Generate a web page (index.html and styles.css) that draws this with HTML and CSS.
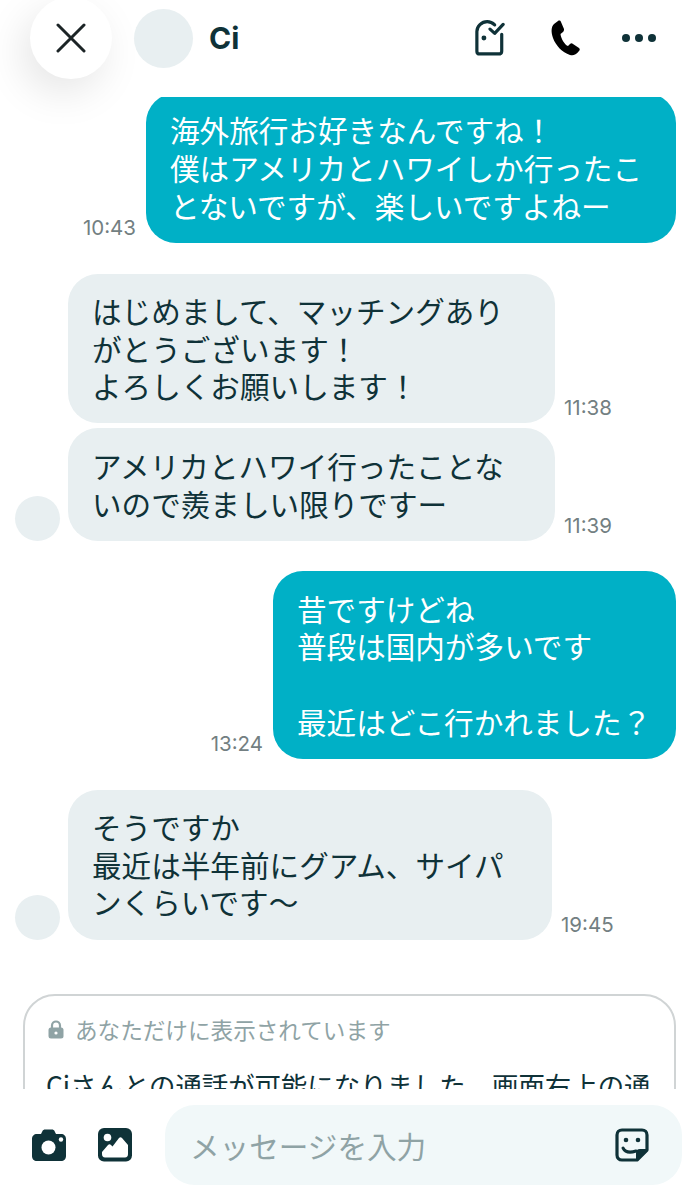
FILE: index.html
```html
<html>
  <head>
    <meta charset="utf-8">
    <link rel="stylesheet" href="styles.css">
  </head>
  <body>
    <div class="page">
      <header class="top">
        <button class="close">
          <svg width="30" height="30" viewBox="0 0 30 30"><path d="M2 2 L28 28 M28 2 L2 28" fill="none" stroke="#1c2426" stroke-width="3" stroke-linecap="round"/></svg>
        </button>
        <div class="top-avatar"></div>
        <div class="name">Ci</div>
        <div class="top-icons">
          <svg class="door" width="30" height="38" viewBox="0 0 32 38"><path d="M21 5 C18 2 15 1.500 13 1.500 C7 1.500 2 6.500 2 12 L2 33 C2 35 3.500 36 5 36 L25 36 C27 36 28.500 35 28.500 33 L28.500 15" fill="none" stroke="#0f3238" stroke-width="3.400" stroke-linecap="round"/><path d="M16 9.500 L21 14 L30 4.500" fill="none" stroke="#0f3238" stroke-width="3.400" stroke-linecap="round" stroke-linejoin="round"/><circle cx="9.500" cy="19" r="2.600" fill="#0f3238"/></svg>
          <svg class="phone" width="30" height="36" viewBox="0 0 30 36"><path d="M7 1 L3 4 C0 7 0 12 2 18 C5 26 11 32 19 35 C22 36 25 35 28 31 C29 30 29 29 28 28 L22 24 C21 23 20 23 19 24 L17 26 C14 25 10 19 9.500 14 L12 12 C13 11 13 10 13 9 L10 2 C9.500 0.500 8 0.300 7 1 Z" fill="#000"/></svg>
          <div class="dots"><i></i><i></i><i></i></div>
        </div>
      </header>

      <main class="chat">
        <div class="row sent first">
          <span class="time">10:43</span>
          <div class="bubble out w530">海外旅行お好きなんですね！<br>僕はアメリカとハワイしか行ったこ<br>とないですが、楽しいですよねー</div>
        </div>

        <div class="row got group">
          <div class="avatar-slot"></div>
          <div class="bubble in w487">はじめまして、マッチングあり<br>がとうございます！<br>よろしくお願いします！</div>
          <span class="time">11:38</span>
        </div>
        <div class="row got tight">
          <div class="avatar-slot"><div class="avatar"></div></div>
          <div class="bubble in w487">アメリカとハワイ行ったことな<br>いので羨ましい限りですー</div>
          <span class="time">11:39</span>
        </div>

        <div class="row sent group">
          <span class="time">13:24</span>
          <div class="bubble out w403">昔ですけどね<br>普段は国内が多いです<br><br>最近はどこ行かれました？</div>
        </div>

        <div class="row got group">
          <div class="avatar-slot"><div class="avatar"></div></div>
          <div class="bubble in w484">そうですか<br>最近は半年前にグアム、サイパ<br>ンくらいです〜</div>
          <span class="time">19:45</span>
        </div>

        <section class="notice">
          <div class="notice-head">
            <svg width="16" height="19" viewBox="0 0 16 19"><path d="M4 8 V5.500 C4 3 6 1.500 8 1.500 C10 1.500 12 3 12 5.500 V8" fill="none" stroke="#8fa3a5" stroke-width="2.200"/><rect x="0.500" y="7.500" width="15" height="11" rx="2.500" fill="#8fa3a5"/><circle cx="8" cy="13" r="1.600" fill="#fff"/></svg>
            <span>あなただけに表示されています</span>
          </div>
          <p class="notice-text">Ciさんとの通話が可能になりました。画面右上の通</p>
        </section>
      </main>

      <footer class="bottom">
        <svg class="tool" width="34" height="32" viewBox="0 0 34 32"><path d="M5 5 H9 L10.500 2 C11 1 12 0.500 13 0.500 H20 C21 0.500 22 1 22.500 2 L24 5 H29 C32 5 34 7 34 10 V27 C34 30 32 32 29 32 H5 C2 32 0 30 0 27 V10 C0 7 2 5 5 5 Z" fill="#0f3238"/><circle cx="16.500" cy="18.500" r="7" fill="#fff"/><circle cx="29" cy="10.500" r="2.200" fill="#fff"/></svg>
        <svg class="tool" width="34" height="34" viewBox="0 0 34 34"><rect width="34" height="33.500" rx="6" fill="#0f3238"/><circle cx="9.500" cy="9.500" r="3.800" fill="#fff"/><path d="M4 26 L4 24 L10 17 C11 16 12 16 13 17 L14.500 18.500 L21 10 C22 9 23 9 24 10 L30 17 V26 C30 28 29 29.500 27 29.500 H7 C5 29.500 4 28 4 26 Z" fill="#fff"/></svg>
        <div class="input">
          <span class="placeholder">メッセージを入力</span>
          <svg width="34" height="34" viewBox="0 0 34 34"><path d="M22 32 H7 C4 32 2 30 2 27 V7 C2 4 4 2 7 2 H27 C30 2 32 4 32 7 V22 Z" fill="none" stroke="#0f3238" stroke-width="3.200" stroke-linejoin="round"/><path d="M22 32 L22 25 C22 23 23 22 25 22 L32 22 Z" fill="#0f3238" stroke="#0f3238" stroke-width="2" stroke-linejoin="round"/><circle cx="11" cy="12" r="2.300" fill="#0f3238"/><circle cx="23" cy="12" r="2.300" fill="#0f3238"/><path d="M8 20 C10 24 15 25 21 23" fill="none" stroke="#0f3238" stroke-width="3" stroke-linecap="round"/></svg>
        </div>
      </footer>
    </div>
  </body>
</html>
```

FILE: styles.css
```css
html,
body {
  margin: 0;
  background: #fff;
}
.page {
  position: relative;
  width: 698px;
  height: 1200px;
  overflow: hidden;
  display: flex;
  flex-direction: column;
  font-family: "Noto Sans CJK JP", "Noto Sans", sans-serif;
  color: #0f3238;
}

/* header */
.top {
  position: relative;
  z-index: 1;
  height: 76px;
  padding: 0 42px 21px 134px;
  background: #fff;
  display: flex;
  align-items: center;
  flex: none;
}
.close {
  position: absolute;
  left: 30px;
  top: -3px;
  width: 82px;
  height: 82px;
  padding: 0;
  border: 0;
  border-radius: 50%;
  background: #fff;
  box-shadow: -8px 14px 40px rgba(0, 0, 0, 0.1);
  display: flex;
  align-items: center;
  justify-content: center;
}
.top-avatar {
  width: 59px;
  height: 59px;
  border-radius: 50%;
  background: #e8eff1;
}
.name {
  margin-left: 16px;
  font-family: Inter, "Liberation Sans", sans-serif;
  font-size: 30px;
  font-weight: 700;
}
.top-icons {
  margin-left: auto;
  display: flex;
  align-items: center;
}
.door {
  margin-right: 46px;
}
.phone {
  margin-right: 41px;
}
.dots {
  display: flex;
  gap: 5px;
}
.dots i {
  width: 8px;
  height: 8px;
  border-radius: 50%;
  background: #0f3238;
}

/* messages */
.chat {
  flex: 1;
  min-height: 0;
  overflow: hidden;
  margin-top: -4px;
  padding: 0 22px 0 15px;
}
.row {
  display: flex;
  align-items: flex-end;
}
.sent {
  justify-content: flex-end;
}
.group {
  margin-top: 30.7px;
}
.first {
  margin-top: 0;
}
.tight {
  margin-top: 5px;
}
.bubble {
  font-size: 29.6px;
  line-height: 37.7px;
  padding: 18.4px 0 18.4px 24px;
  border-radius: 30px;
  box-sizing: border-box;
  white-space: nowrap;
}
.out {
  background: #00b0c6;
  color: #fff;
}
.in {
  background: #e8eff1;
}
.w530 {
  width: 530px;
}
.w487 {
  width: 487px;
}
.w484 {
  width: 484px;
}
.w403 {
  width: 403px;
}
.avatar-slot {
  width: 53px;
  flex: none;
}
.avatar {
  width: 45px;
  height: 45px;
  border-radius: 50%;
  background: #e8eff1;
}
.time {
  font-family: Inter, "Liberation Sans", sans-serif;
  font-size: 20.5px;
  line-height: 22px;
  margin-bottom: 4px;
  color: #737f82;
}
.sent .time {
  margin-right: 10px;
}
.got .time {
  margin-left: 9px;
}

/* system notice */
.notice {
  margin-top: 54px;
  margin-left: 8px;
  height: 140px;
  box-sizing: border-box;
  padding: 20px 21px;
  border: 2px solid #d0d4d5;
  border-radius: 32px;
}
.notice-head {
  display: flex;
  align-items: center;
  gap: 11px;
  padding-left: 2px;
  font-size: 22.6px;
  line-height: 28px;
  color: #8fa3a5;
}
.notice-text {
  margin: 24px 0 0;
  font-size: 26.4px;
  line-height: 34px;
  white-space: nowrap;
  color: #0f3238;
}

/* input bar */
.bottom {
  flex: none;
  height: 111px;
  background: #fff;
  padding: 16px 16px 15px 32px;
  box-sizing: border-box;
  display: flex;
  align-items: center;
}
.tool {
  flex: none;
  margin-right: 32px;
}
.input {
  flex: 1;
  height: 80px;
  margin-left: 1px;
  padding: 0 33px 0 25px;
  border-radius: 30px;
  background: #f1f8f9;
  display: flex;
  align-items: center;
  justify-content: space-between;
}
.placeholder {
  font-size: 29.6px;
  color: #8fa3a5;
}
```
